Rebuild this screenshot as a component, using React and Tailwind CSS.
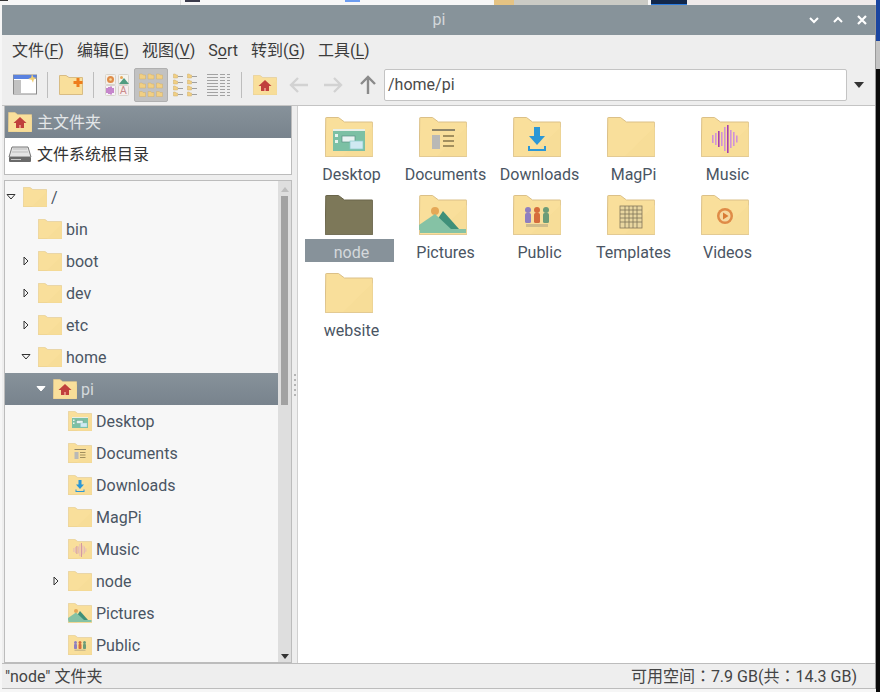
import React from "react";

const FONT = "font-['Roboto','Noto_Sans_CJK_SC',sans-serif]";

const Badge = ({ kind, small }) => {
  if (kind === "desktop")
    return (
      <g>
        <rect x="8" y="12" width="32" height="22" fill="#7cc0a4" />
        <rect x="8" y="12" width="32" height="2" fill="#e8efe8" />
        <rect x="10" y="17" width="3" height="3" fill="#e8f4ee" />
        <rect x="10" y="23" width="3" height="3" fill="#e8f4ee" />
        <rect x="17" y="19" width="13" height="6" fill="#e9f3f2" stroke="#5a8f84" strokeWidth="0.7" />
        <rect x="25" y="24" width="13" height="8" fill="#cfe9f2" stroke="#8cc" strokeWidth="0.7" />
      </g>
    );
  if (kind === "documents")
    return (
      <g>
        <rect x="13" y="12" width="23" height="2" fill="#8d8468" />
        <rect x="13" y="18" width="8" height="14" fill="#b9b9b6" />
        <rect x="24" y="18" width="11" height="2" fill="#a28f5e" />
        <rect x="24" y="23" width="11" height="2" fill="#a28f5e" />
        <rect x="24" y="28" width="11" height="2" fill="#a28f5e" />
      </g>
    );
  if (kind === "downloads")
    return (
      <g fill="#2b97d6">
        <rect x="21" y="10" width="6" height="10" />
        <path d="M16 19h16l-8 9z" />
        <path d="M15 29h2v3h14v-3h2v5H15z" />
      </g>
    );
  if (kind === "music")
    return (
      <g opacity={small ? 0.55 : 1}>
        {[[11, 8], [14, 12], [17, 16], [20, 14], [23, 24], [26, 28], [29, 18], [32, 14], [35, 7]].map(([x, h]) => (
          <rect key={x} x={x} y={22 - h / 2} width="1.6" height={h} fill={x === 26 || x === 17 ? "#a63fb0" : "#cf93d8"} />
        ))}
      </g>
    );
  if (kind === "pictures")
    return (
      <g>
        <circle cx="16" cy="16" r="4" fill="#e5a857" />
        <path d="M24 16l16 18H12z" fill="#3f9079" />
        <path d="M16 19l17 16H0v-5z" fill="#85c2a5" />
        <rect x="1" y="34" width="46" height="4" fill="#85c2a5" />
      </g>
    );
  if (kind === "public")
    return (
      <g>
        <circle cx="15" cy="15" r="3" fill="#8f7fc0" />
        <rect x="12" y="18" width="6" height="10" rx="1.5" fill="#8f7fc0" />
        <circle cx="24" cy="15" r="3" fill="#d56d3c" />
        <rect x="21" y="18" width="6" height="10" rx="1.5" fill="#d56d3c" />
        <circle cx="33" cy="15" r="3" fill="#6c9c78" />
        <rect x="30" y="18" width="6" height="10" rx="1.5" fill="#6c9c78" />
        <rect x="13" y="29" width="22" height="3" fill="#d0bd8c" />
      </g>
    );
  if (kind === "templates")
    return (
      <g>
        <rect x="13" y="11" width="22" height="22" fill="#e8d6a0" stroke="#84775a" strokeWidth="0.8" />
        <path d="M13 15h22M13 19h22M13 23h22M13 27h22M18 11v22M22 11v22M26 11v22M30 11v22" stroke="#7f7558" strokeWidth="0.8" fill="none" />
      </g>
    );
  if (kind === "videos")
    return (
      <g>
        <circle cx="24" cy="21" r="8" fill="#df8b47" />
        <circle cx="24" cy="21" r="5.5" fill="#f6d9a0" />
        <path d="M22 17.5l5.5 3.5-5.5 3.5z" fill="#d97b35" />
      </g>
    );
  if (kind === "home")
    return (
      <g fill="#c0403c">
        <path d="M24 10l13 12H11z" />
        <rect x="16" y="21" width="16" height="11" />
        <rect x="22" y="26" width="4" height="6" fill="#e58a7e" />
      </g>
    );
  return null;
};

const Folder = ({ size = 48, kind, selected }) => (
  <svg width={size} height={(size * 40) / 48} viewBox="0 0 48 40" className="shrink-0">
    <path
      d="M.75 1a.5.5 0 0 1 .5-.5H13.5L19.5 5H47a.75.75 0 0 1 .75.75V39a.75.75 0 0 1-.75.75H1A.75.75 0 0 1 .25 39z"
      fill={selected ? "#7d7859" : "#f9df9b"}
      stroke={selected ? "#6a654b" : "#dbc088"}
      strokeWidth="1"
    />
    {!selected && <path d="M47.5 10v29H18z" fill="#f7dd98" />}
    <Badge kind={kind} small={size < 48} />
  </svg>
);

const Mnemonic = ({ before, letter, after = "" }) => (
  <span>
    {before}
    <span className="underline underline-offset-2 decoration-1">{letter}</span>
    {after}
  </span>
);

const Separator = () => <div className="w-px h-[26px] bg-[#bdbdbd]" />;

const NewWindowIcon = () => (
  <svg width="24" height="21" viewBox="0 0 24 21">
    <rect x="0.5" y="1" width="23" height="19" fill="#fff" stroke="#8a8a8a" />
    <rect x="1" y="6" width="7" height="13.5" fill="#c2c2c2" />
    <rect x="0.5" y="1" width="23" height="4" fill="#5a82e0" />
    <path d="M19 0l1.4 3.2 3.4.8-3 1.4-.8 3.4-1.4-3-3.4-.8 3-1.4z" fill="#f2cf72" />
  </svg>
);

const NewFolderIcon = () => (
  <svg width="24" height="20" viewBox="0 0 48 40">
    <path d="M1 1h13l6 4h27v34H1z" fill="#f9df9b" stroke="#d8bc84" strokeWidth="2" />
    <path d="M35 6h6v6h6v6h-6v6h-6v-6h-6v-6h6z" fill="#ee7d1c" />
  </svg>
);

const MixedIcon = () => (
  <svg width="24" height="22" viewBox="0 0 24 22">
    <rect x="0.5" y="0.5" width="10" height="10" rx="1" fill="#f4f0ea" stroke="#d8d4cc" />
    <circle cx="5.5" cy="5.5" r="3.5" fill="#df8b47" />
    <circle cx="5.5" cy="5.5" r="1.3" fill="#f6d9a0" />
    <rect x="13.5" y="0.5" width="10" height="10" rx="1" fill="#f4f4ee" stroke="#d8d4cc" />
    <circle cx="16.5" cy="3.5" r="1.5" fill="#e5a857" />
    <path d="M14 10l5-6 5 6z" fill="#4f9c80" />
    <rect x="0.5" y="11.5" width="10" height="10" rx="1" fill="#f6f2f6" stroke="#d8d4cc" />
    <path d="M2 14v5M4 13v7M6 12.5v8M8 14v5" stroke="#a63fb0" strokeWidth="1.2" />
    <rect x="13.5" y="11.5" width="10" height="10" rx="1" fill="#f7eeee" stroke="#d8d4cc" />
    <text x="15" y="20" fontSize="10" fill="#c98a8a" fontFamily="Liberation Sans, sans-serif">A</text>
  </svg>
);

const MiniFolder = ({ x, y, w = 5, h = 5 }) => (
  <path d={`M${x} ${y}h${w * 0.45}l1 1h${w * 0.55 - 1}v${h - 1}h-${w}z`} fill="#f1cf83" stroke="#cfae6c" strokeWidth="0.5" />
);

const GridIcon = () => (
  <svg width="24" height="24" viewBox="0 0 24 24">
    {[0.5, 9, 17.5].flatMap((x) => [1, 10, 18.5].map((y) => <MiniFolder key={`${x}-${y}`} x={x} y={y} w={6} h={5} />))}
  </svg>
);

const ListIcon = () => (
  <svg width="24" height="24" viewBox="0 0 24 24">
    {[0, 14].flatMap((x) =>
      [1, 7, 13, 19].map((y) => (
        <g key={`${x}-${y}`}>
          <MiniFolder x={x + 0.5} y={y} w={4} h={4} />
          <rect x={x + 5} y={y + 2} width="5" height="1" fill="#a0a0a0" />
        </g>
      )),
    )}
  </svg>
);

const DetailIcon = () => (
  <svg width="24" height="24" viewBox="0 0 24 24">
    {[1, 4, 7, 10, 13, 16, 19, 22].map((y) => (
      <g key={y} fill="#a2a2a2">
        <rect x="0" y={y} width="11" height="1" />
        <rect x="13" y={y} width="5" height="1" />
        <rect x="20" y={y} width="3" height="1" />
      </g>
    ))}
  </svg>
);

const Arrow = ({ d, color, w = 20 }) => (
  <svg width={w} height="20" viewBox="0 0 20 20" fill="none" stroke={color} strokeWidth="2.4">
    <path d={d} />
  </svg>
);

const Expander = ({ open, inverted }) => (
  <svg width="12" height="12" viewBox="0 0 12 12" className="shrink-0">
    {open ? (
      <path d="M2 3.5h8L6 8z" fill={inverted ? "#fff" : "#f7f7f7"} stroke={inverted ? "#fff" : "#333"} strokeWidth="1" />
    ) : (
      <path d="M4 2v8L8 6z" fill="#f7f7f7" stroke="#333" strokeWidth="1" />
    )}
  </svg>
);

const treeRows = [
  { name: "/", depth: 0, open: true },
  { name: "bin", depth: 1 },
  { name: "boot", depth: 1, closed: true },
  { name: "dev", depth: 1, closed: true },
  { name: "etc", depth: 1, closed: true },
  { name: "home", depth: 1, open: true },
  { name: "pi", depth: 2, open: true, kind: "home", selected: true },
  { name: "Desktop", depth: 3, kind: "desktop" },
  { name: "Documents", depth: 3, kind: "documents" },
  { name: "Downloads", depth: 3, kind: "downloads" },
  { name: "MagPi", depth: 3 },
  { name: "Music", depth: 3, kind: "music" },
  { name: "node", depth: 3, closed: true },
  { name: "Pictures", depth: 3, kind: "pictures" },
  { name: "Public", depth: 3, kind: "public" },
];

const files = [
  { name: "Desktop", kind: "desktop" },
  { name: "Documents", kind: "documents" },
  { name: "Downloads", kind: "downloads" },
  { name: "MagPi" },
  { name: "Music", kind: "music" },
  { name: "node", selected: true },
  { name: "Pictures", kind: "pictures" },
  { name: "Public", kind: "public" },
  { name: "Templates", kind: "templates" },
  { name: "Videos", kind: "videos" },
  { name: "website" },
];

const TreeRow = ({ row }) => (
  <div className={`h-8 flex items-center ${row.selected ? "bg-gradient-to-b from-[#87929a] to-[#78838d] text-[#d5d9dc]" : "text-[#4a5563]"}`}>
    <div className="flex items-center" style={{ paddingLeft: row.depth * 15 }}>
      <div className="w-[18px] pr-[6px] flex justify-center">
        {(row.open || row.closed) && <Expander open={row.open} inverted={row.selected} />}
      </div>
      <Folder size={24} kind={row.kind} />
      <span className="ml-[4px] pt-[2px]">{row.name}</span>
    </div>
  </div>
);

const FileItem = ({ file }) => (
  <div className="w-[94px] h-[78px] flex flex-col items-center">
    <Folder kind={file.kind} selected={file.selected} />
    <div className={`w-[89px] h-[23px] mt-[4px] pl-[5px] text-center leading-[27px] whitespace-nowrap ${file.selected ? "bg-[#87929a] text-[#d5d9dc]" : "text-[#4a5563]"}`}>
      {file.name}
    </div>
  </div>
);

export default function App() {
  return (
    <div className={`w-[880px] h-[692px] flex bg-[#f6f6f6] overflow-hidden text-base ${FONT}`}>
      <div className="w-[876px] flex flex-col">
        {/* bits of the desktop behind the window */}
        <div className="h-[5px] flex bg-[#f6f6f6]">
          <div className="w-[8px] h-[1px] bg-[#333]" />
          <div className="w-[172px]" />
          <div className="w-px bg-[#dddddd]" />
          <div className="ml-[4px] w-[15px] h-[2px] bg-[#3a3a4a]" />
          <div className="w-[145px]" />
          <div className="w-[15px] h-[2px] bg-[#6c9cf0]" />
          <div className="w-[134px]" />
          <div className="w-[20px] bg-[#e5c383]" />
          <div className="w-[134px] bg-[#cbcbc5]" />
          <div className="w-[3px]" />
          <div className="w-[36px] bg-[#12274a] border-b border-[#2a7be0]" />
          <div className="flex-1 bg-[#efeaea]" />
        </div>

        <div className="flex-1 ml-[2px] flex flex-col bg-[#eeeeee] border-r border-[#9a9a9a]">
          <div className="h-[30px] bg-[#87939a] relative flex items-center justify-center pl-px text-[#d3d8da]">
            pi
            <div className="absolute right-[8px] top-0 h-full flex items-center gap-[14px]">
              <svg width="10" height="10" viewBox="0 0 10 10" fill="none" stroke="#fff" strokeWidth="2"><path d="M1 3l4 4 4-4" /></svg>
              <svg width="10" height="10" viewBox="0 0 10 10" fill="none" stroke="#fff" strokeWidth="2"><path d="M1 7l4-4 4 4" /></svg>
              <svg width="10" height="10" viewBox="0 0 10 10" fill="none" stroke="#fff" strokeWidth="2.2"><path d="M1 1l8 8M9 1l-8 8" /></svg>
            </div>
          </div>

          <div className="h-[31px] flex items-center pl-[10px] gap-[13px] text-[#3c3c3c]">
            <Mnemonic before="文件(" letter="F" after=")" />
            <Mnemonic before="编辑(" letter="E" after=")" />
            <Mnemonic before="视图(" letter="V" after=")" />
            <Mnemonic before="S" letter="o" after="rt" />
            <Mnemonic before="转到(" letter="G" after=")" />
            <Mnemonic before="工具(" letter="L" after=")" />
          </div>

          <div className="h-[39px] flex items-center pl-[11px] pb-[2px]">
            <NewWindowIcon />
            <div className="ml-[10px]"><Separator /></div>
            <div className="ml-[11px]"><NewFolderIcon /></div>
            <div className="ml-[10px]"><Separator /></div>
            <div className="ml-[11px]"><MixedIcon /></div>
            <div className="ml-[5px] w-[34px] h-[34px] flex items-center justify-center bg-[#c2c2c2] border border-[#b0b0b0] rounded-[2px]"><GridIcon /></div>
            <div className="ml-[5px]"><ListIcon /></div>
            <div className="ml-[10px]"><DetailIcon /></div>
            <div className="ml-[10px]"><Separator /></div>
            <div className="ml-[11px]"><Folder size={24} kind="home" /></div>
            <div className="ml-[12px]"><Arrow d="M19 10H2M9 3l-7 7 7 7" color="#d2d2d2" /></div>
            <div className="ml-[14px]"><Arrow d="M1 10h17M11 3l7 7-7 7" color="#d2d2d2" /></div>
            <div className="ml-[15px]"><Arrow d="M10 19V2M3 9l7-7 7 7" color="#8a8a8a" /></div>
            <div className="ml-[6px] w-[463px] h-8 flex items-center bg-white border border-[#c4c4c4] rounded-[2px] pl-[3px] text-[#4a4a4a]">/home/pi</div>
            <svg className="ml-[6px]" width="12" height="8" viewBox="0 0 12 8"><path d="M1 1h10L6 7z" fill="#333" /></svg>
          </div>

          <div className="flex-1 min-h-0 flex border-t border-[#c4c4c4]">
            <div className="w-[288px] ml-[2px] flex flex-col">
              <div className="h-[69px] bg-white border border-[#bcbcbc] border-t-0">
                <div className="h-8 flex items-center pl-[3px] bg-gradient-to-b from-[#87929a] to-[#78838d] text-[#e3e6e8]">
                  <Folder size={24} kind="home" />
                  <span className="ml-[5px] pt-[2px]">主文件夹</span>
                </div>
                <div className="h-8 flex items-center pl-[3px] text-[#333]">
                  <svg width="24" height="20" viewBox="0 0 24 20">
                    <path d="M4 3h16l3 10H1z" fill="#e4e4e4" stroke="#777" />
                    <path d="M5 5h14M4 8h16" stroke="#bbb" />
                    <rect x="1" y="13" width="22" height="5" rx="1" fill="#6a6a6a" />
                    <rect x="3" y="15" width="10" height="1" fill="#c8c8c8" />
                  </svg>
                  <span className="ml-[5px] pt-[2px]">文件系统根目录</span>
                </div>
              </div>
              <div className="mt-[5px] flex-1 min-h-0 flex bg-[#f7f7f7] border border-[#bcbcbc] overflow-hidden">
                <div className="flex-1 min-w-0 overflow-hidden">
                  {treeRows.map((row) => <TreeRow key={row.name} row={row} />)}
                </div>
                <div className="w-[13px] bg-[#dedede] flex flex-col items-center">
                  <svg className="mt-[5px]" width="10" height="7" viewBox="0 0 10 7"><path d="M1 6h8L5 1z" fill="#bdbdbd" /></svg>
                  <div className="mt-[3px] w-[7px] h-[209px] bg-[#a2a2a2]" />
                  <svg className="mt-auto mb-[2px]" width="10" height="7" viewBox="0 0 10 7"><path d="M1 1h8L5 6z" fill="#333" /></svg>
                </div>
              </div>
            </div>

            <div className="w-[5px] flex flex-col items-center justify-center gap-[3px]">
              {[0, 1, 2, 3, 4].map((i) => <div key={i} className="w-[2px] h-[2px] bg-[#b4b4b4]" />)}
            </div>

            <div className="flex-1 bg-white border-l border-[#d0d0d0] pl-[4px] pt-[11px] grid grid-cols-[repeat(5,94px)] auto-rows-[78px] content-start">
              {files.map((file) => <FileItem key={file.name} file={file} />)}
            </div>
          </div>

          <div className="h-[26px] flex items-center justify-between pl-[3px] pr-[18px] text-[#444] border-y border-[#bcbcbc]">
            <span className="pt-px">"node" 文件夹</span>
            <span className="pt-px font-['Roboto','Noto_Sans_CJK_TC',sans-serif]">可用空间：7.9 GB(共：14.3 GB)</span>
          </div>
        </div>
        <div className="h-[3px]" />
      </div>

      <div className="w-[4px] flex flex-col bg-[#0a0a0a]">
        <div className="h-[41px] bg-[#1a45a0]" />
        <div className="h-[28px] bg-[#c4c4c4]" />
      </div>
    </div>
  );
}
